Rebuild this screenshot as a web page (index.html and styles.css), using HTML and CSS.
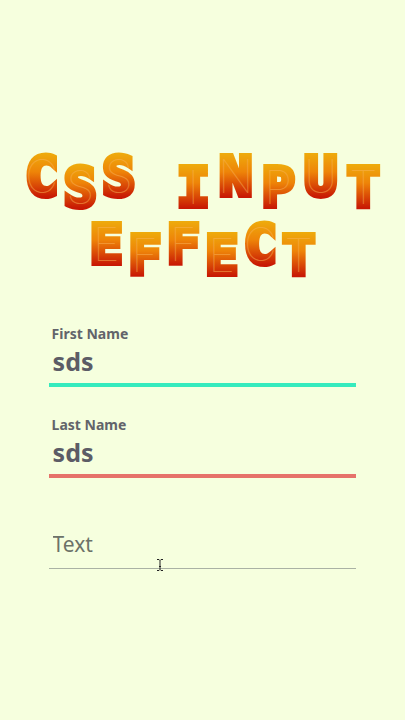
FILE: index.html
```html
<!DOCTYPE html>
<html lang="en">
<head>
    <meta charset="UTF-8">
    <meta name="viewport" content="width=device-width, initial-scale=1.0">
    <title>CSS Input Effect</title>
    <link rel="stylesheet" href="styles.css">
</head>
<body>
    <div class="container">
        <h1 class="title">
            <span class="word">
                <span data-letter="C">C</span><span data-letter="S">S</span><span data-letter="S">S</span>
            </span>
            <span class="word word-wide">
                <span data-letter="I">I</span><span data-letter="N">N</span><span data-letter="P">P</span><span data-letter="U">U</span><span data-letter="T">T</span>
            </span>
            <span class="word">
                <span data-letter="E">E</span><span data-letter="F">F</span><span data-letter="F">F</span><span data-letter="E">E</span><span data-letter="C">C</span><span data-letter="T">T</span>
            </span>
        </h1>
        <form class="form">
            <div class="field field-first">
                <label for="firstName">First Name</label>
                <input type="text" id="firstName" value="sds" autocomplete="off">
            </div>
            <div class="field field-last">
                <label for="lastName">Last Name</label>
                <input type="text" id="lastName" value="sds" autocomplete="off">
            </div>
            <div class="field field-empty">
                <input type="text" id="text" placeholder="Text" aria-label="Text" autocomplete="off">
                <svg class="cursor" width="8" height="14" viewBox="0 0 8 14">
                    <path d="M1 1.5h2l1 1 1-1h2M4 2.5v9M1 12.5h2l1-1 1 1h2M3 8.5h2" fill="none" stroke="#222" stroke-width="1"/>
                </svg>
            </div>
        </form>
    </div>
</body>
</html>
```
FILE: styles.css
```css
* {
    box-sizing: border-box;
}
body {
    margin: 0;
    background-color: #f6ffde;
    font-family: "Noto Sans", "Open Sans", sans-serif;
    color: #62646a;
}
.container {
    min-height: 100vh;
    padding-top: 148px;
}
.title {
    display: flex;
    flex-wrap: wrap;
    justify-content: center;
    column-gap: 36px;
    margin: 0;
    font-family: "DejaVu Sans Mono", monospace;
    font-size: 54px;
    line-height: 57px;
}
.word {
    display: flex;
    align-items: flex-start;
    height: 68px;
}
.word-wide {
    gap: 4px;
}
.word span {
    position: relative;
    padding: 0 3px;
    background: linear-gradient(#eeaa0c 10%, #ee8408 42%, #c81804 86%);
    -webkit-background-clip: text;
    background-clip: text;
    color: transparent;
    -webkit-text-stroke: 6px transparent;
}
/* thin line inside each letter */
.word span::after {
    content: attr(data-letter);
    position: absolute;
    inset: 0;
    text-align: center;
    font-family: Inter, sans-serif;
    font-size: 46px;
    font-weight: 100;
    color: rgba(250, 180, 90, 0.5);
    -webkit-text-stroke: 0;
}
.word span:nth-child(even),
.word-wide span:nth-child(odd) {
    align-self: flex-end;
}
.word-wide span:nth-child(even) {
    align-self: flex-start;
}
.form {
    width: 76%;
    margin: 40px auto 0;
}
.field {
    position: relative;
    display: flex;
    flex-direction: column;
    margin-bottom: 28px;
}
.field label {
    padding-left: 3px;
    font-size: 14px;
    line-height: 20px;
    font-weight: 700;
}
.field input {
    width: 100%;
    height: 43px;
    padding: 0 4px 6px;
    border: none;
    border-bottom: 4px solid #35ebbd;
    border-radius: 0;
    outline: none;
    background: transparent;
    font-family: inherit;
    font-size: 25px;
    font-weight: 700;
    color: #5c5c66;
}
.field-last input {
    border-bottom-color: #e6726a;
}
.field-empty {
    padding-top: 20px;
}
.field-empty input {
    height: 43px;
    border-bottom: 1px solid #aab2a4;
    font-size: 21px;
    font-weight: 400;
}
.field-empty input::placeholder {
    color: #6c7268;
    opacity: 1;
}
.cursor {
    position: absolute;
    left: 35%;
    bottom: -3px;
}
```
